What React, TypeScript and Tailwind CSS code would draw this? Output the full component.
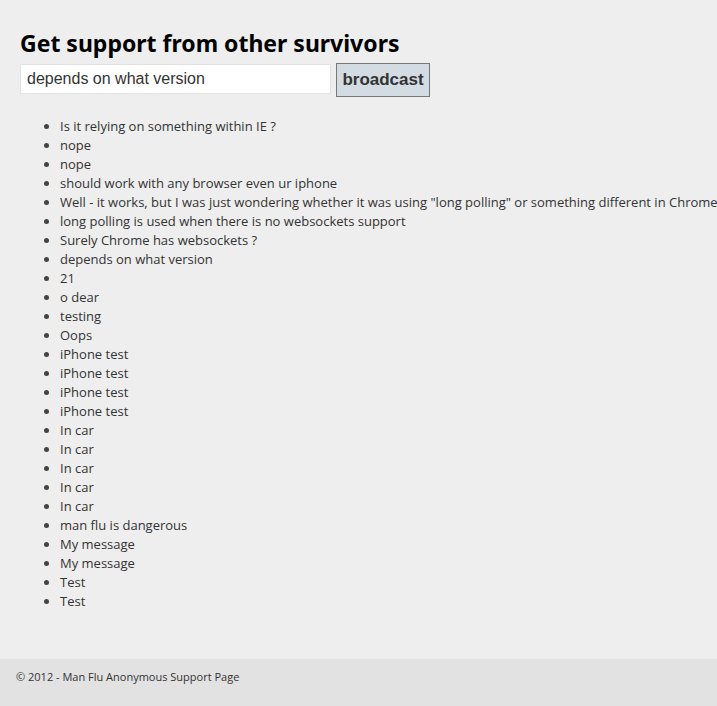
import React from "react";

const messages = [
  "Is it relying on something within IE ?",
  "nope",
  "nope",
  "should work with any browser even ur iphone",
  'Well - it works, but I was just wondering whether it was using "long polling" or something different in Chrome and IE',
  "long polling is used when there is no websockets support",
  "Surely Chrome has websockets ?",
  "depends on what version",
  "21",
  "o dear",
  "testing",
  "Oops",
  "iPhone test",
  "iPhone test",
  "iPhone test",
  "iPhone test",
  "In car",
  "In car",
  "In car",
  "In car",
  "In car",
  "man flu is dangerous",
  "My message",
  "My message",
  "Test",
  "Test",
];

export default function App() {
  return (
    <div className="w-[717px] h-[706px] overflow-hidden bg-[#eeeeee] flex flex-col" style={{ fontFamily: '"Open Sans", "Noto Sans", sans-serif' }}>
      <div className="flex-1 px-5 pt-[27px]">
        <h1 className="text-[23px] leading-[32px] font-bold text-black" style={{ fontFamily: '"Noto Sans", "Open Sans", sans-serif' }}>
          Get support from other survivors
        </h1>
        <div className="flex items-start gap-[5px] mt-[4px]">
          <input
            readOnly
            value="depends on what version"
            className="w-[311px] h-[30px] mt-[1px] bg-white border border-[#e2e2e2] px-[6px] text-[16px] text-[#333] outline-none"
            style={{ fontFamily: '"Liberation Sans", Arial, sans-serif' }}
          />
          <button
            className="w-[94px] h-[34px] bg-[#d3dce3] border border-[#777] text-[17px] font-bold text-[#333]"
            style={{ fontFamily: '"Liberation Sans", Arial, sans-serif' }}
          >
            broadcast
          </button>
        </div>
        <ul className="mt-[20px] pl-[40px] list-disc text-[13px] leading-[19px] text-[#333] whitespace-nowrap marker:text-[#444]">
          {messages.map((m, i) => (
            <li key={i} className="pl-0">{m}</li>
          ))}
        </ul>
      </div>
      <footer className="h-[47px] bg-[#e2e2e2] px-4 pt-[10px] text-[11px] leading-[16px] text-[#333]">
        © 2012 - Man Flu Anonymous Support Page
      </footer>
    </div>
  );
}
